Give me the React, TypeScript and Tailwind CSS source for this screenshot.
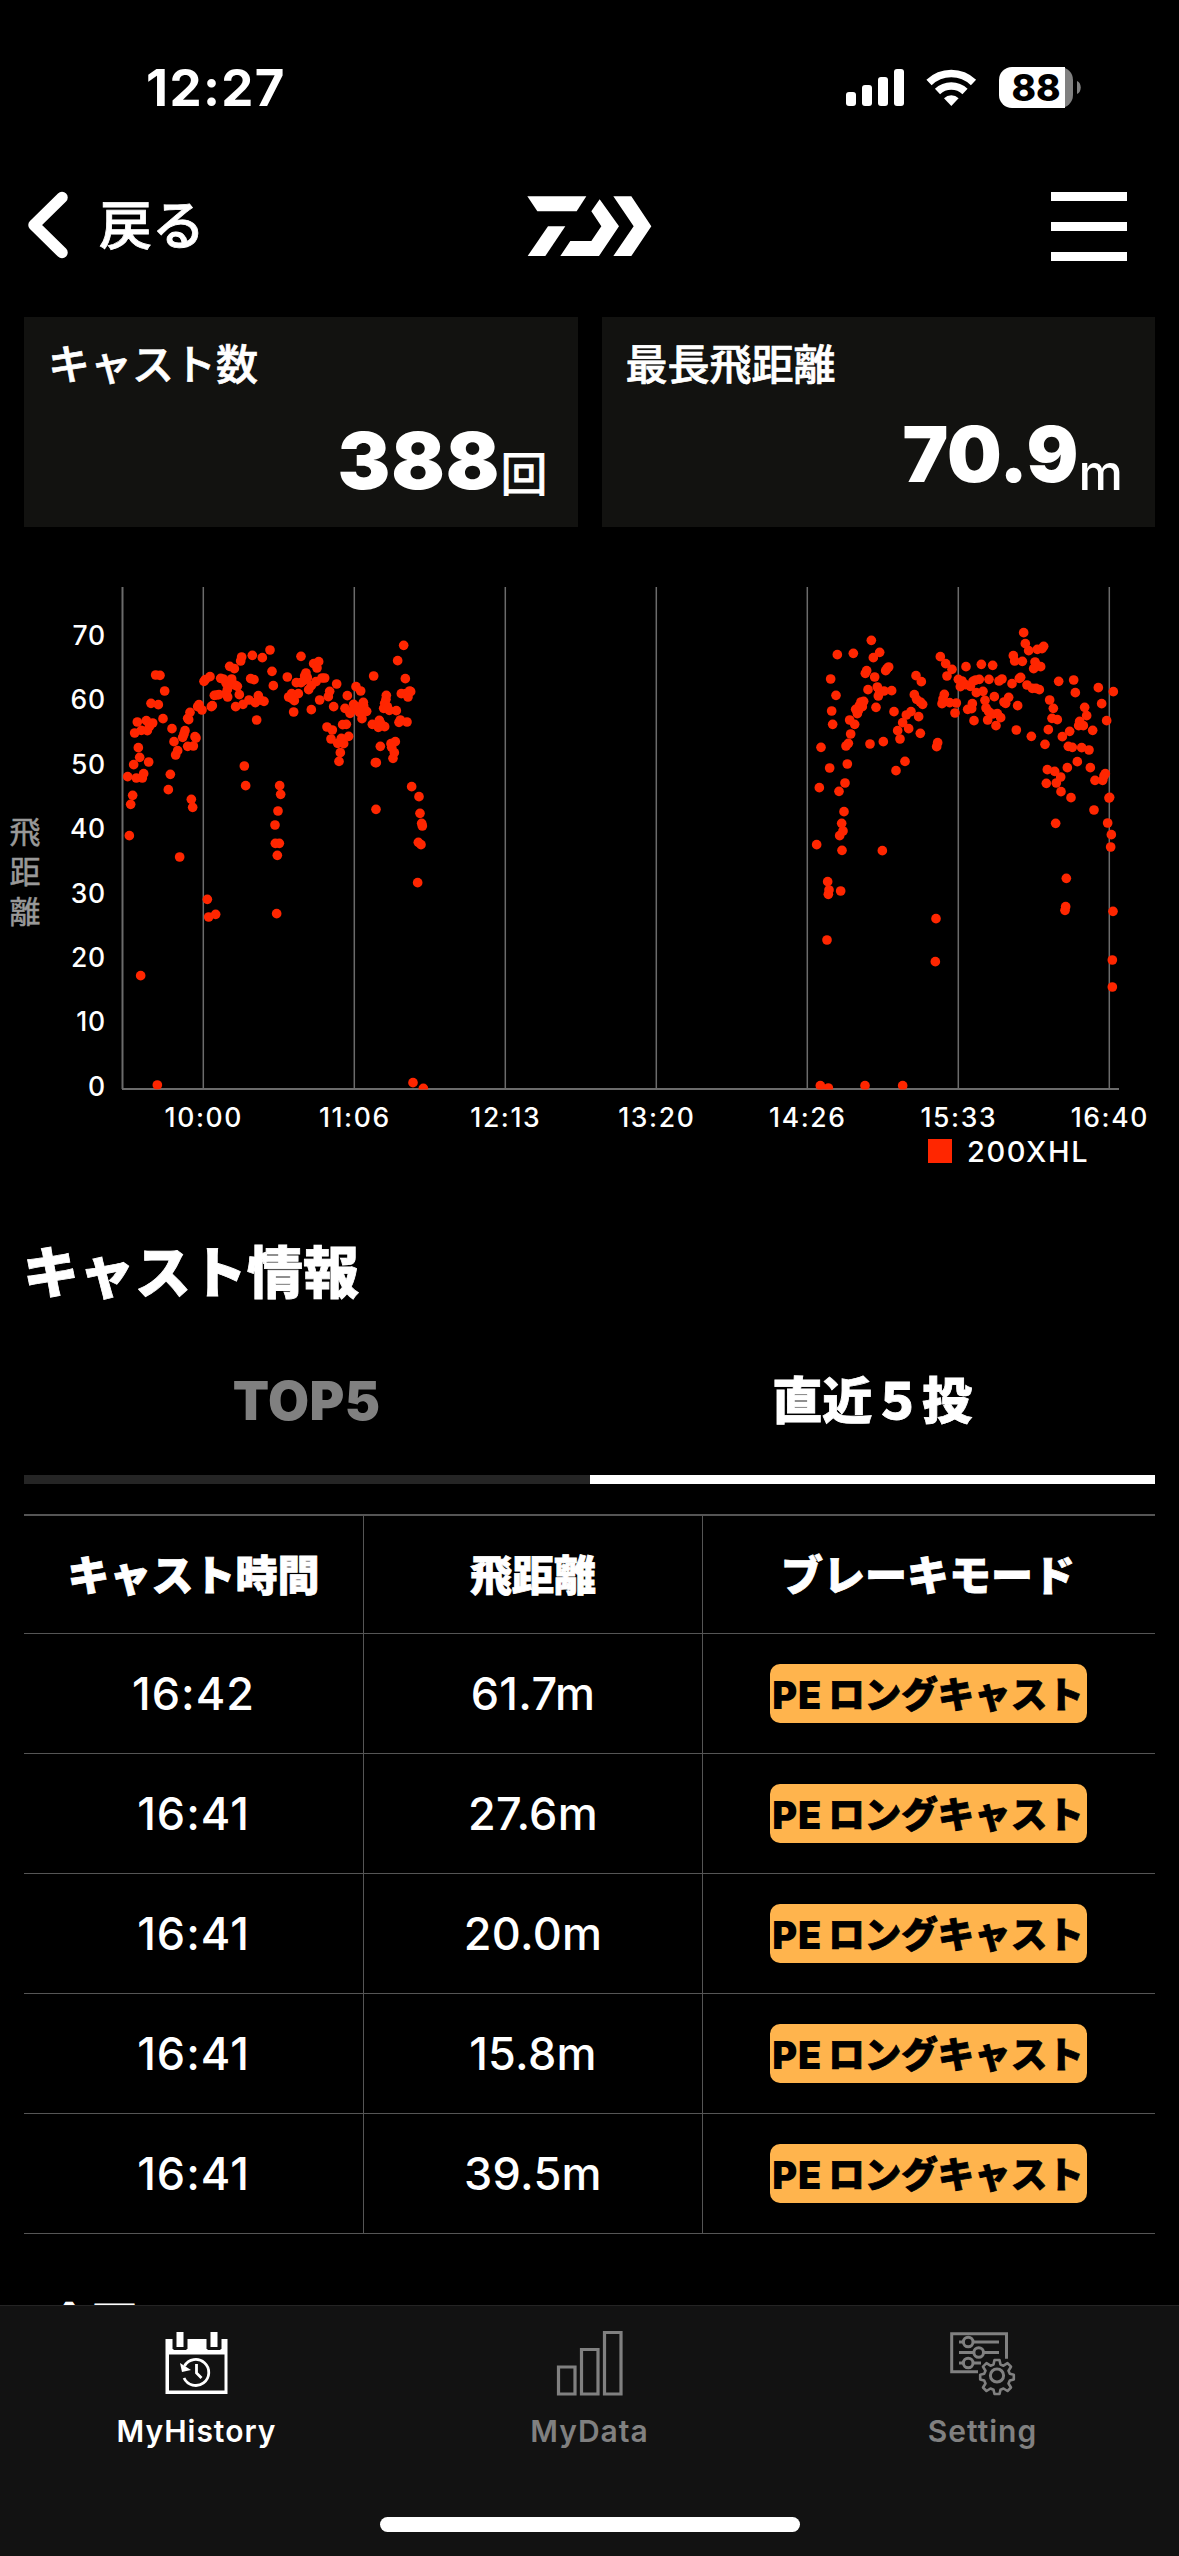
import { clsx } from "clsx";

const RED = "#ff2600";

// Plot units are a third of a pixel, x from the left of each session, y from the chart top
const morning: [number, number][] = [
  [167, 285], [180, 286], [194, 333], [153, 370], [175, 374], [189, 416], [112, 426], [139, 422], [158, 429],
  [104, 459], [124, 451], [142, 452], [148, 440], [115, 503], [119, 532], [101, 554], [146, 546], [83, 590],
  [131, 581], [109, 594], [127, 594], [98, 646], [92, 673], [88, 767], [211, 583], [205, 629], [216, 446],
  [222, 485], [233, 512], [227, 525], [255, 452], [248, 472], [252, 462], [285, 470], [263, 499], [280, 498],
  [288, 474], [263, 415], [270, 397], [266, 419], [297, 374], [293, 380], [306, 390], [334, 380], [337, 377],
  [274, 658], [278, 682], [312, 304], [316, 299], [330, 290], [343, 346], [350, 345], [357, 344], [362, 295],
  [370, 297], [378, 309], [395, 297], [386, 318], [382, 329], [378, 341], [383, 351], [394, 309], [405, 315],
  [412, 319], [389, 259], [403, 266], [422, 243], [425, 231], [457, 226], [487, 233], [510, 210], [452, 296],
  [462, 299], [418, 344], [407, 380], [429, 373], [447, 360], [475, 347], [466, 368], [481, 360], [492, 364],
  [470, 420], [516, 274], [520, 317], [562, 291], [603, 229], [641, 251], [656, 245], [651, 264], [566, 351],
  [575, 341], [583, 362], [595, 341], [575, 355], [581, 396], [618, 279], [614, 288], [622, 293], [589, 308],
  [603, 308], [612, 301], [626, 329], [634, 317], [648, 305], [666, 294], [674, 294], [659, 360], [634, 389],
  [689, 334], [685, 350], [710, 312], [701, 380], [742, 347], [768, 320], [782, 333], [821, 288], [681, 441],
  [697, 450], [693, 477], [728, 434], [739, 433], [746, 469], [724, 475], [713, 490], [731, 491], [721, 518],
  [717, 544], [735, 385], [750, 400], [761, 373], [761, 387], [774, 381], [790, 367], [791, 378], [800, 394],
  [778, 397], [786, 416], [817, 433], [838, 421], [835, 442], [854, 440], [843, 432], [859, 346], [858, 358],
  [854, 370], [851, 385], [868, 391], [889, 392], [862, 380], [841, 499], [873, 491], [886, 485], [875, 502],
  [883, 518], [879, 535], [826, 548], [829, 548], [828, 688], [897, 427], [901, 420], [921, 426], [904, 341],
  [918, 341], [932, 335], [929, 333], [924, 351], [916, 296], [893, 242], [911, 196], [935, 620], [957, 650],
  [960, 700], [965, 730], [967, 738], [955, 787], [963, 794], [433, 558], [437, 617], [539, 617], [542, 643],
  [534, 693], [525, 735], [526, 790], [538, 790], [532, 826], [530, 1001], [239, 831], [322, 958], [326, 1011],
  [347, 1003], [122, 1187], [172, 1515], [953, 908], [939, 1508], [970, 1525],
];

const afternoon: [number, number][] = [
  [244, 181], [142, 224], [190, 220], [269, 217], [250, 233], [122, 297], [296, 261], [291, 266], [287, 272],
  [230, 272], [226, 280], [254, 291], [138, 346], [234, 329], [262, 321], [269, 336], [282, 333], [305, 332],
  [265, 348], [258, 382], [125, 393], [128, 433], [221, 364], [213, 366], [208, 377], [217, 380], [197, 388],
  [205, 392], [202, 401], [179, 420], [194, 433], [182, 462], [175, 490], [168, 498], [240, 492], [280, 485],
  [93, 502], [119, 564], [172, 552], [88, 623], [165, 609], [147, 634], [162, 695], [155, 730], [159, 753],
  [149, 767], [80, 794], [156, 811], [277, 812], [312, 395], [378, 287], [394, 305], [373, 344], [380, 358],
  [391, 366], [398, 373], [349, 405], [363, 395], [386, 410], [338, 428], [356, 446], [323, 452], [330, 477],
  [391, 460], [443, 488], [440, 500], [345, 544], [318, 572], [451, 230], [467, 251], [486, 268], [471, 288],
  [463, 343], [459, 357], [456, 371], [479, 368], [499, 369], [495, 399], [528, 260], [574, 253], [608, 256],
  [505, 298], [516, 303], [511, 320], [526, 314], [541, 319], [549, 304], [557, 300], [568, 298], [597, 298],
  [627, 303], [636, 297], [559, 338], [579, 334], [585, 361], [613, 350], [547, 371], [545, 386], [533, 388],
  [552, 422], [588, 384], [596, 395], [608, 402], [622, 401], [632, 413], [593, 420], [618, 437], [642, 366],
  [656, 352], [647, 370], [683, 377], [666, 311], [688, 295], [692, 292], [711, 315], [727, 325], [738, 325],
  [748, 329], [670, 227], [674, 243], [697, 244], [701, 158], [706, 191], [716, 212], [742, 208], [761, 199],
  [756, 206], [735, 246], [731, 266], [752, 260], [742, 257], [679, 450], [724, 469], [765, 493], [775, 449],
  [779, 360], [790, 385], [786, 415], [802, 419], [806, 304], [851, 300], [856, 338], [884, 382], [890, 407],
  [839, 454], [817, 470], [869, 424], [866, 437], [880, 437], [908, 451], [925, 323], [935, 371], [950, 422],
  [970, 335], [835, 499], [847, 502], [875, 503], [897, 510], [862, 545], [832, 563], [901, 563], [772, 569],
  [794, 574], [812, 591], [799, 609], [769, 610], [813, 635], [843, 653], [797, 730], [912, 690], [915, 601],
  [938, 601], [946, 581], [942, 588], [959, 652], [957, 654], [953, 729], [964, 764], [962, 801], [829, 895],
  [827, 980], [825, 991], [969, 994], [967, 1140], [967, 1221], [113, 905], [117, 930], [115, 943], [152, 933],
  [111, 1080], [438, 1016], [436, 1145], [91, 1517], [115, 1524], [225, 1517], [338, 1517],
];

const xTicks = [
  { x: 203, label: "10:00" },
  { x: 354, label: "11:06" },
  { x: 505, label: "12:13" },
  { x: 656, label: "13:20" },
  { x: 807, label: "14:26" },
  { x: 958, label: "15:33" },
  { x: 1109, label: "16:40" },
];

const yTicks = [70, 60, 50, 40, 30, 20, 10, 0];

const casts = [
  { time: "16:42", distance: "61.7m" },
  { time: "16:41", distance: "27.6m" },
  { time: "16:41", distance: "20.0m" },
  { time: "16:41", distance: "15.8m" },
  { time: "16:41", distance: "39.5m" },
];

// Thickens the CJK bold face for headings
const heavy = "font-black [-webkit-text-stroke:0.8px]";

function StatusBar() {
  return (
    <div className="flex h-[168px] shrink-0 items-start justify-between pl-[146px] pr-[98px] pt-[66px]">
      <span className="text-[51px] leading-[44px] font-bold tracking-[1.4px]">12:27</span>
      <svg className="h-[44px] w-[236px]" viewBox="845 66 236 44">
        <g fill="#fff">
          <rect x="846" y="92" width="10" height="14" rx="3" />
          <rect x="862" y="85" width="10" height="21" rx="3" />
          <rect x="878" y="77" width="10" height="29" rx="3" />
          <rect x="894" y="69" width="10" height="37" rx="3" />
        </g>
        <g fill="none" stroke="#fff" strokeWidth="7.5">
          <path d="M929 82.5a32 32 0 0 1 44.500 0" />
          <path d="M937.500 91.500a20 20 0 0 1 27.500 0" />
        </g>
        <path d="M951.300 106l-7.300-7.700a10.500 10.500 0 0 1 14.600 0z" fill="#fff" />
        <path d="M1012 67h48a13 13 0 0 1 13 13v15a13 13 0 0 1-13 13h-48z" fill="#808080" />
        <path d="M1012 67h53v41h-53a13 13 0 0 1-13-13V80a13 13 0 0 1 13-13z" fill="#fff" />
        <path d="M1077 81c5 2 5 11 0 13z" fill="#808080" />
        <text x="1036" y="101" textAnchor="middle" fontSize="37" fontWeight="800" fill="#000">88</text>
      </svg>
    </div>
  );
}

function Header() {
  return (
    <header className="flex h-[149px] shrink-0 items-start justify-between pl-[26px] pr-[52px] pt-[20px]">
      <div className="flex h-[74px] w-[501px] items-center gap-[29px]">
        <svg className="h-[70px] w-[44px]" viewBox="0 0 44 70" fill="none" stroke="#fff" strokeWidth="11.500" strokeLinecap="round" strokeLinejoin="round">
          <path d="M36 7.500L8 35l28 27.500" />
        </svg>
        <span className="pt-[2px] text-[53px] leading-[70px] font-medium [-webkit-text-stroke:0.8px]">戻る</span>
      </div>
      <svg className="mt-[8px] h-[62px] w-[126px]" viewBox="80 80 378 186" fill="#fff">
        <path d="M81 81H258L229 126H111z" />
        <path d="M143 171H195L135 260H82z" />
        <path d="M298 90L356 171L296 260H180L210 215H273L303 171L273 126z" />
        <path d="M339 81H393L453 171L393 260H339L400 171z" />
      </svg>
      <div className="flex w-[474px] justify-end">
        <div className="mt-1 flex flex-col gap-[21px]">
          <span className="h-[9px] w-[76px] bg-white" />
          <span className="h-[9px] w-[76px] bg-white" />
          <span className="h-[9px] w-[76px] bg-white" />
        </div>
      </div>
    </header>
  );
}

function Summary() {
  return (
    <section className="grid h-[210px] shrink-0 grid-cols-2 gap-6 px-6">
      <div className="flex flex-col justify-between bg-[#121210] pt-[21px] pr-[30px] pb-[18px] pl-[24px]">
        <span className="text-[42px] leading-[54px] font-medium [-webkit-text-stroke:0.7px]">キャスト数</span>
        <div className="flex items-baseline justify-end pb-[2px] leading-[70px]">
          <span className="text-[79px] font-black tracking-[1px]">388</span>
          <span className="relative top-[2px] text-[47px] [-webkit-text-stroke:1px]">回</span>
        </div>
      </div>
      <div className="flex flex-col justify-between bg-[#121210] pt-[21px] pr-[32px] pb-[26px] pl-[24px]">
        <span className="text-[42px] leading-[54px] font-medium [-webkit-text-stroke:0.7px]">最長飛距離</span>
        <div className="flex items-baseline justify-end pb-[2px] leading-[70px]">
          <span className="text-[77px] font-black">70.9</span>
          <span className="relative top-[8px] text-[50px] font-medium">m</span>
        </div>
      </div>
    </section>
  );
}

function CastChart() {
  return (
    <section className="mt-[53px] h-[600px] shrink-0">
      <svg className="h-[600px] w-[1179px]" viewBox="0 580 1179 600">
        <defs>
          <clipPath id="plot">
            <rect x="0" y="580" width="1179" height="509.500" />
          </clipPath>
        </defs>
        <g stroke="#6b6b6b" strokeWidth="1.500">
          <path d="M122.500 587V1089" strokeWidth="2" />
          {xTicks.map((t) => (
            <path key={t.x} d={`M${t.x + 0.3} 587V1089`} />
          ))}
          <path d="M122 1089H1119" strokeWidth="2" />
        </g>
        <g clipPath="url(#plot)" fill={RED}>
          <g transform="translate(100 580) scale(0.33333)">
            {morning.map(([x, y], i) => (
              <circle key={i} cx={x} cy={y} r="14.500" />
            ))}
          </g>
          <g transform="translate(790 580) scale(0.33333)">
            {afternoon.map(([x, y], i) => (
              <circle key={i} cx={x} cy={y} r="14.500" />
            ))}
          </g>
        </g>
        <g fill="#fff" fontSize="26.500" fontWeight="500">
          {yTicks.map((v, i) => (
            <text key={v} x="106" y={645 + i * 64.4} textAnchor="end" letterSpacing="0.8">{v}</text>
          ))}
          {xTicks.map((t) => (
            <text key={t.label} x={t.x + 0.8} y="1127" textAnchor="middle" letterSpacing="1.600">{t.label}</text>
          ))}
        </g>
        <g fill="#999" stroke="#999" strokeWidth="0.500" fontSize="31" textAnchor="middle">
          <text x="25" y="843">飛</text>
          <text x="25" y="883">距</text>
          <text x="25" y="923">離</text>
        </g>
        <rect x="928" y="1139" width="24" height="24" fill={RED} />
        <text x="967" y="1162" fill="#fff" fontSize="29" fontWeight="500" letterSpacing="1.600">200XHL</text>
      </svg>
    </section>
  );
}

function Tabs() {
  return (
    <div className="mx-6 grid h-[141px] shrink-0 grid-cols-2 text-center">
      <div className="border-b-[9px] border-[#252525] pt-[23px] text-[53px] leading-[70px] font-black tracking-[0.5px] text-[#808080]">
        TOP5
      </div>
      <div className={clsx("border-b-[9px] border-white pt-[23px] text-[50px] leading-[70px]", heavy)}>
        直近５投
      </div>
    </div>
  );
}

function CastTable() {
  const row = "grid grid-cols-[340px_339px_1fr] border-b border-[#555] text-center";
  const cell = "flex items-center justify-center";

  return (
    <div className="mx-6 mt-[30px] shrink-0 border-t-2 border-[#555]">
      <div className={clsx(row, "h-[118px] text-[42px]", heavy)}>
        <div className={clsx(cell, "border-r border-[#555] pt-[2px]")}>キャスト時間</div>
        <div className={clsx(cell, "border-r border-[#555] pt-[2px]")}>飛距離</div>
        <div className={clsx(cell, "pt-[2px] pr-[2px]")}>ブレーキモード</div>
      </div>
      {casts.map((cast, i) => (
        <div key={i} className={clsx(row, "h-[120px]")}>
          <div className={clsx(cell, "border-r border-[#555] pt-px text-[45px] font-medium tracking-[1px]")}>{cast.time}</div>
          <div className={clsx(cell, "border-r border-[#555] pt-px text-[45px] font-medium tracking-[0.3px]")}>{cast.distance}</div>
          <div className={clsx(cell, "pr-[2px]")}>
            <span className="flex h-[59px] w-[317px] items-center justify-center gap-[6px] rounded-[10px] bg-[#ffb44d] pt-[3px] font-black whitespace-nowrap text-black">
              <span className="text-[38px] tracking-[1px]">PE</span>
              <span className="text-[36.5px] [-webkit-text-stroke:0.8px]">ロングキャスト</span>
            </span>
          </div>
        </div>
      ))}
    </div>
  );
}

function HistoryIcon() {
  return (
    <svg className="h-[66px] w-[66px]" viewBox="163.500 2330 66 66">
      <path d="M165 2339h7v10h15v-10h19v10h15v-10h6v55h-62z" fill="#fff" />
      <path d="M168.500 2354.500h55.500v36h-55.500z" fill="#121212" />
      <path d="M173 2336h13v14h-13zM207 2336h13v14h-13z" fill="#121212" />
      <path d="M176 2332h7v15h-7zM210 2332h7v15h-7z" fill="#fff" />
      <g fill="none" stroke="#fff" strokeWidth="2.800">
        <path d="M184 2366a13 13 0 1 1-0.500 12" />
        <path d="M196 2364v9l5 5" />
      </g>
      <path d="M179.500 2363l2 9 9-2z" fill="#fff" />
    </svg>
  );
}

function DataIcon() {
  return (
    <svg className="h-[66px] w-[68px]" viewBox="556 2330 68 66" fill="none" stroke="#808080" strokeWidth="3.200">
      <path d="M558.500 2367h16.500v27h-16.500zM581.500 2349.500h16.500v44.500h-16.500zM604.500 2332.500h16.500v61.500h-16.500z" />
    </svg>
  );
}

function SettingIcon() {
  return (
    <svg className="h-[66px] w-[68px]" viewBox="949 2330 68 66" fill="none" stroke="#808080" strokeWidth="3">
      <path d="M978 2371.700h-26.300v-38h54.800v25" />
      <path d="M959 2342h4.500M973 2342h26M959 2352.500h15M983.500 2352.500H999M959 2363h4.500M973 2363h8" />
      <circle cx="968.200" cy="2342" r="4.800" />
      <circle cx="978.700" cy="2352.500" r="4.800" />
      <circle cx="968.200" cy="2363" r="4.800" />
      <circle cx="997" cy="2375.500" r="6.600" />
      <path
        strokeWidth="2.600"
        strokeLinejoin="round"
        d="M994.500 2360h5l1 4.500 3 1.200 4-2.500 3.500 3.500-2.500 4 1.300 3 4 1v4.800l-4 1-1.300 3 2.500 4-3.500 3.500-4-2.500-3 1.200-1 4.300h-5l-1-4.300-3-1.200-4 2.500-3.500-3.500 2.500-4-1.300-3-4-1v-4.800l4-1 1.300-3-2.500-4 3.500-3.500 4 2.500 3-1.200z"
      />
    </svg>
  );
}

function TabBar() {
  const item = "flex flex-col items-center gap-[17px] text-[30px] leading-[36px] font-semibold tracking-[1px]";

  return (
    <nav className="flex h-[251px] shrink-0 flex-col items-center justify-between border-t border-[#242424] bg-[#121212] pt-6 pb-[24px]">
      <div className="grid w-full grid-cols-3">
        <div className={item}>
          <HistoryIcon />
          MyHistory
        </div>
        <div className={clsx(item, "text-[#808080]")}>
          <DataIcon />
          MyData
        </div>
        <div className={clsx(item, "text-[#808080]")}>
          <SettingIcon />
          Setting
        </div>
      </div>
      <div className="h-[15px] w-[420px] rounded-full bg-white" />
    </nav>
  );
}

export default function App() {
  return (
    <div className="flex h-[2556px] w-[1179px] flex-col overflow-hidden bg-black font-['Inter','Noto_Sans_CJK_JP',sans-serif] text-white">
      <StatusBar />
      <Header />
      <main className="flex min-h-0 flex-1 flex-col overflow-hidden">
        <Summary />
        <CastChart />
        <h2 className={clsx("mt-[53px] h-[110px] shrink-0 pl-[23px] text-[56px] leading-[80px]", heavy)}>キャスト情報</h2>
        <Tabs />
        <CastTable />
        <p className={clsx("mt-[62px] shrink-0 pl-[47px] text-[45px] leading-[60px]", heavy)}>今回</p>
      </main>
      <TabBar />
    </div>
  );
}
